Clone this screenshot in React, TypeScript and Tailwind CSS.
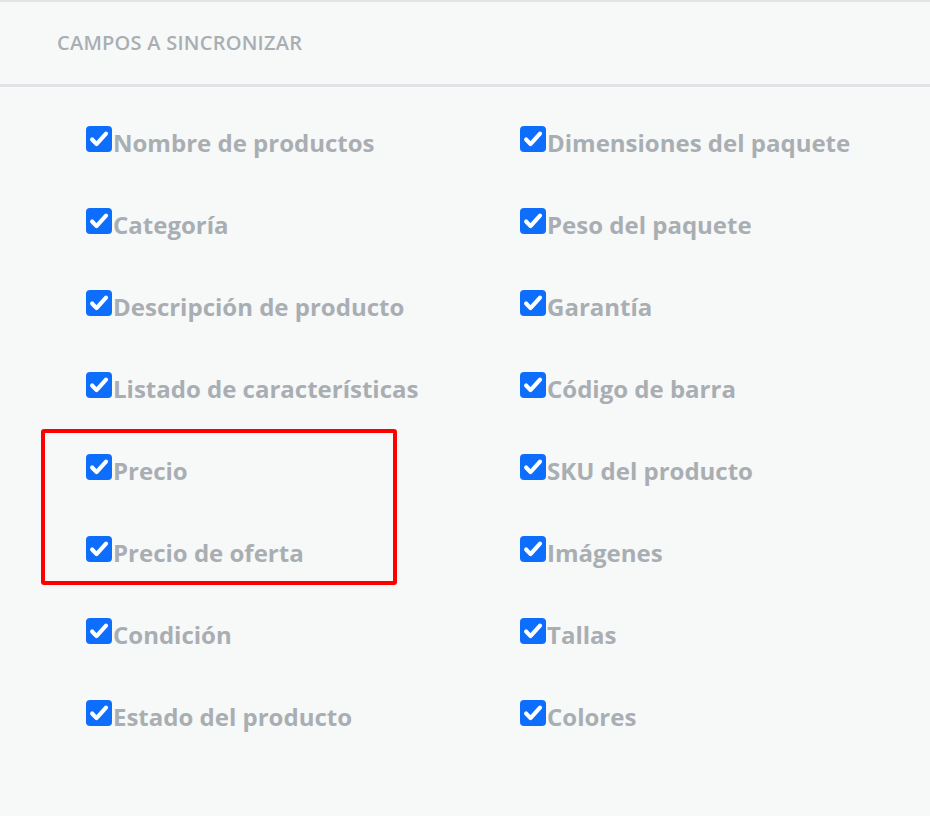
const left = [
  'Nombre de productos',
  'Categoría',
  'Descripción de producto',
  'Listado de características',
  'Precio',
  'Precio de oferta',
  'Condición',
  'Estado del producto',
]

const right = [
  'Dimensiones del paquete',
  'Peso del paquete',
  'Garantía',
  'Código de barra',
  'SKU del producto',
  'Imágenes',
  'Tallas',
  'Colores',
]

function Check() {
  return (
    <span className="flex h-[26px] w-[26px] shrink-0 items-center justify-center rounded-[4px] bg-[#0d6efd]">
      <svg viewBox="0 0 16 16" className="h-[22px] w-[22px]" fill="none">
        <path d="M3 8.4l3.2 3.3 6.9-7.6" stroke="white" strokeWidth="3" strokeLinecap="round" strokeLinejoin="round" />
      </svg>
    </span>
  )
}

function Item({ label }: { label: string }) {
  return (
    <label className="flex h-[26px] items-end">
      <Check />
      <span className="mb-[-3px] ml-[1px] text-[24px] font-bold leading-none text-[#a9aeb3]">{label}</span>
    </label>
  )
}

export default function App() {
  return (
    <div className="min-h-[816px] w-[930px] border-t-2 border-[#e1e3e6] bg-[#f7f8f8] font-['Open_Sans',sans-serif]">
      <div className="flex h-[85px] items-center border-b-[3px] border-[#e1e3e6] pl-[57px]">
        <h2 className="text-[20px] font-semibold tracking-[0.25px] text-[#a9aeb3]">CAMPOS A SINCRONIZAR</h2>
      </div>
      <div className="flex pt-[39px]">
        <div className="flex w-[520px] flex-col pl-[86px]">
          {left.map((l, i) => (
            <div key={l} className={i === 4 ? 'relative' : ''}>
              {i === 4 && (
                <div className="absolute left-[-45px] top-[-25px] h-[156px] w-[356px] rounded-[3px] border-4 border-[#ff0000]" />
              )}
              <div className="h-[82px]">
                <Item label={l} />
              </div>
            </div>
          ))}
        </div>
        <div className="flex flex-col">
          {right.map((l) => (
            <div key={l} className="h-[82px]">
              <Item label={l} />
            </div>
          ))}
        </div>
      </div>
    </div>
  )
}
